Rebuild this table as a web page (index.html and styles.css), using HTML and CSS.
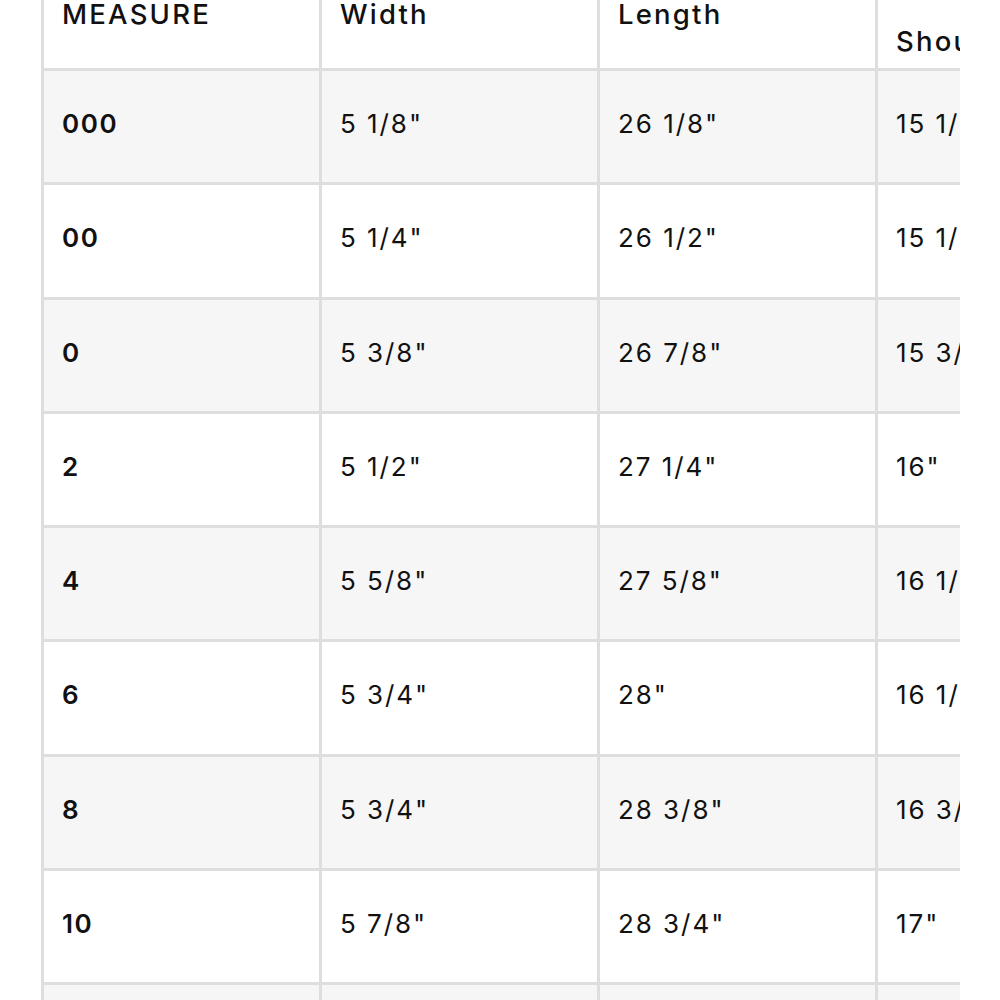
FILE: index.html
```html
<!DOCTYPE html>
<html lang="en">
<head>
<meta charset="utf-8">
<title>Size chart</title>
<link rel="stylesheet" href="styles.css">
</head>
<body>
<div class="chart-wrap">
  <table class="chart">
    <thead>
      <tr>
        <th class="caps">MEASURE</th>
        <th>Width</th>
        <th>Length</th>
        <th>Across<br>Shoulder</th>
        <th>Bust</th>
      </tr>
    </thead>
    <tbody>
      <tr><td class="size">000</td><td>5 1/8"</td><td>26 1/8"</td><td>15 1/4"</td><td>32"</td></tr>
      <tr><td class="size">00</td><td>5 1/4"</td><td>26 1/2"</td><td>15 1/2"</td><td>33"</td></tr>
      <tr><td class="size">0</td><td>5 3/8"</td><td>26 7/8"</td><td>15 3/4"</td><td>34"</td></tr>
      <tr><td class="size">2</td><td>5 1/2"</td><td>27 1/4"</td><td>16"</td><td>35"</td></tr>
      <tr><td class="size">4</td><td>5 5/8"</td><td>27 5/8"</td><td>16 1/4"</td><td>36"</td></tr>
      <tr><td class="size">6</td><td>5 3/4"</td><td>28"</td><td>16 1/2"</td><td>37"</td></tr>
      <tr><td class="size">8</td><td>5 3/4"</td><td>28 3/8"</td><td>16 3/4"</td><td>38 1/2"</td></tr>
      <tr><td class="size">10</td><td>5 7/8"</td><td>28 3/4"</td><td>17"</td><td>40"</td></tr>
      <tr><td class="size">12</td><td>6"</td><td>29 1/8"</td><td>17 1/4"</td><td>41 1/2"</td></tr>
    </tbody>
  </table>
</div>
</body>
</html>
```

FILE: styles.css
```css
html, body {
  margin: 0;
  padding: 0;
  background: #ffffff;
}

body {
  font-family: Inter, "Liberation Sans", Arial, sans-serif;
  color: #111111;
  overflow: hidden;
}

.chart-wrap {
  margin: -40px 0 0 41px;
  width: 919px;
  overflow: hidden;
}

.chart {
  border-collapse: separate;
  border-spacing: 0;
  table-layout: fixed;
  width: 1393px;
  border-left: 3px solid #dedede;
  font-size: 26px;
  letter-spacing: 0.075em;
}

.chart th,
.chart td {
  width: 239px;
  text-align: left;
  vertical-align: middle;
  border-right: 3px solid #dedede;
  border-bottom: 3px solid #dedede;
  white-space: nowrap;
}

.chart th {
  font-size: 27.5px;
  font-weight: 500;
  letter-spacing: 0.08em;
  line-height: 54px;
  padding: 0 18px;
}

.chart td {
  font-weight: 400;
  line-height: 27px;
  padding: 39px 18px 45.25px;
}

.chart td.size {
  font-weight: 600;
  letter-spacing: 0.06em;
}

.chart tbody tr:nth-child(odd) td {
  background: #f6f6f6;
}
```
